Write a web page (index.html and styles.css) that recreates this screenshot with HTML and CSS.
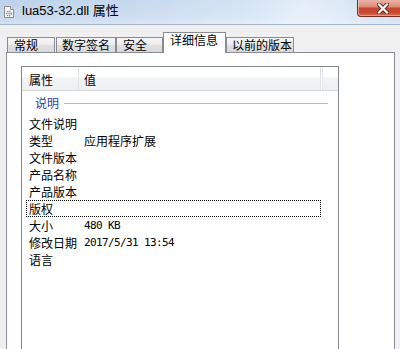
FILE: index.html
```html
<!DOCTYPE html>
<html>
<head>
<meta charset="utf-8">
<link rel="stylesheet" href="styles.css">
</head>
<body>
<div class="window">
  <div class="titlebar">
    <svg class="ficon" width="12" height="12" viewBox="0 0 12 12">
      <path d="M1.5 0.5 H7.5 L10.5 3.5 V11.5 H1.5 Z" fill="#fff" stroke="#8a8f98"/>
      <path d="M7.5 0.5 V3.5 H10.5" fill="#e8e8e8" stroke="#8a8f98"/>
      <circle cx="6" cy="7.5" r="2.3" fill="none" stroke="#7d8590" stroke-width="1.4" stroke-dasharray="1.2 0.8"/>
      <circle cx="6" cy="7.5" r="0.9" fill="#9aa3ad"/>
    </svg>
    <span class="title">lua53-32.dll 属性</span>
    <div class="close">
      <svg width="12" height="11" viewBox="0 0 12 11">
        <path d="M2 1.5 L10 9.5 M10 1.5 L2 9.5" stroke="#5a2a22" stroke-width="4.2" stroke-linecap="square"/>
        <path d="M2 1.5 L10 9.5 M10 1.5 L2 9.5" stroke="#ffffff" stroke-width="2.2" stroke-linecap="square"/>
      </svg>
    </div>
  </div>
  <div class="client">
    <div class="tabs">
      <div class="tab t1">常规</div>
      <div class="tab t2">数字签名</div>
      <div class="tab t3">安全</div>
      <div class="tab active t4">详细信息</div>
      <div class="tab t5">以前的版本</div>
    </div>
    <div class="panel">
      <div class="listview">
        <div class="lv-header">
          <div class="hcol c1">属性</div>
          <div class="hcol c2">值</div>
          <div class="hcol c3"></div>
        </div>
        <div class="group"><span class="gtext">说明</span><span class="gline"></span></div>
        <div class="row"><span class="k">文件说明</span><span class="v"></span></div>
        <div class="row"><span class="k">类型</span><span class="v">应用程序扩展</span></div>
        <div class="row"><span class="k">文件版本</span><span class="v"></span></div>
        <div class="row"><span class="k">产品名称</span><span class="v"></span></div>
        <div class="row"><span class="k">产品版本</span><span class="v"></span></div>
        <div class="row focus"><span class="k">版权</span><span class="v"></span></div>
        <div class="row"><span class="k">大小</span><span class="v mono">480 KB</span></div>
        <div class="row"><span class="k">修改日期</span><span class="v mono">2017/5/31 13:54</span></div>
        <div class="row"><span class="k">语言</span><span class="v"></span></div>
      </div>
    </div>
  </div>
</div>
</body>
</html>
```

FILE: styles.css
```css
html, body {
  margin: 0;
  padding: 0;
  width: 400px;
  height: 349px;
  overflow: hidden;
  background: #f0f0f0;
}
body {
  font-family: "Noto Sans CJK SC", "Liberation Sans", sans-serif;
  font-size: 12px;
  color: #000;
}
.window {
  width: 400px;
  height: 349px;
  overflow: hidden;
}
.titlebar {
  height: 24px;
  border-bottom: 1px solid #a3b6cc;
  display: flex;
  align-items: flex-start;
  padding-left: 3px;
  background:
    linear-gradient(to bottom, rgba(255,255,255,0) 0%, rgba(255,255,255,0.15) 70%, rgba(255,255,255,0.35) 100%),
    linear-gradient(to right, #bdd3eb 0%, #c6d9ee 35%, #d3e3f4 60%, #e4eef9 76%, #dbe8f6 86%, #c9dbef 100%);
}
.ficon {
  margin-top: 6px;
  margin-right: 7px;
  flex: none;
}
.title {
  margin-top: 3px;
  line-height: 16px;
  font-family: "Liberation Sans", "Noto Sans CJK SC", sans-serif;
  font-size: 13px;
  color: #000;
  white-space: nowrap;
}
.close {
  margin-left: auto;
  width: 43px;
  height: 17px;
  box-sizing: border-box;
  border: 1px solid #7b2a20;
  border-top: none;
  border-right: none;
  border-bottom-left-radius: 4px;
  background: linear-gradient(to bottom, #eab3a5 0%, #df8f7c 40%, #c9472f 52%, #c84a33 78%, #dc7256 100%);
  box-shadow: inset 1px 0 0 rgba(255,255,255,0.45), inset 0 -1px 0 rgba(255,200,180,0.5);
  display: flex;
  align-items: center;
  padding-left: 19px;
  padding-top: 1px;
}
.client {
  background: #f0f0f0;
}
.tabs {
  margin-top: 7px;
  height: 20px;
  padding-left: 7px;
  display: flex;
  align-items: flex-end;
}
.tab {
  box-sizing: border-box;
  height: 15px;
  border: 1px solid #898c95;
  border-bottom: none;
  padding-left: 6px;
  line-height: 14px;
  white-space: nowrap;
  background: linear-gradient(to bottom, #f6f6f6 0%, #ececec 50%, #e0e0e0 51%, #d9d9d9 100%);
}
.t1 { width: 48px; margin-right: 1px; }
.t2 { width: 60px; padding-left: 5px; }
.t3 { width: 47px; }
.t4 { width: 63px; }
.t5 { width: 68px; padding-left: 5px; }
.tab.active {
  height: 21px;
  margin-bottom: -1px;
  background: #fff;
  position: relative;
  z-index: 1;
}
.panel {
  margin: 0 5px 0 6px;
  height: 320px;
  border: 1px solid #898c95;
  background: #fff;
  padding: 13px 0 0 14px;
}
.listview {
  width: 318px;
  height: 300px;
  box-sizing: border-box;
  border: 1px solid #828790;
  background: #fff;
}
.lv-header {
  height: 24px;
  box-sizing: border-box;
  border-bottom: 1px solid #d5d5d5;
  display: flex;
  background: linear-gradient(to bottom, #ffffff 0%, #ffffff 45%, #f3f4f6 46%, #eff0f2 100%);
}
.hcol {
  box-sizing: border-box;
  padding-top: 3px;
  line-height: 20px;
  white-space: nowrap;
}
.c1 { width: 57px; padding-left: 7px; border-right: 1px solid #e2e3e6; }
.c2 { width: 242px; padding-left: 5px; border-right: 1px solid #dfe0e3; box-shadow: 1px 0 0 #ffffff, 2px 0 0 #e4e5e8; }
.c3 { flex: 1; }
.group {
  height: 24px;
  display: flex;
  align-items: center;
  padding-left: 13px;
  padding-right: 10px;
}
.gtext {
  color: #2540b0;
  line-height: 14px;
}
.gline {
  flex: 1;
  height: 1px;
  margin-left: 5px;
  background: #b0b7df;
}
.row {
  margin-left: 4px;
  width: 295px;
  box-sizing: border-box;
  height: 17px;
  border: 1px dotted transparent;
  padding-left: 2px;
  display: flex;
  line-height: 15px;
  white-space: nowrap;
}
.row.focus {
  border-color: #000;
}
.k {
  width: 55px;
  flex: none;
}
.v {
  flex: 1;
}
.mono {
  font-family: "DejaVu Sans Mono", monospace;
  font-size: 11px;
  letter-spacing: -0.62px;
}
```
